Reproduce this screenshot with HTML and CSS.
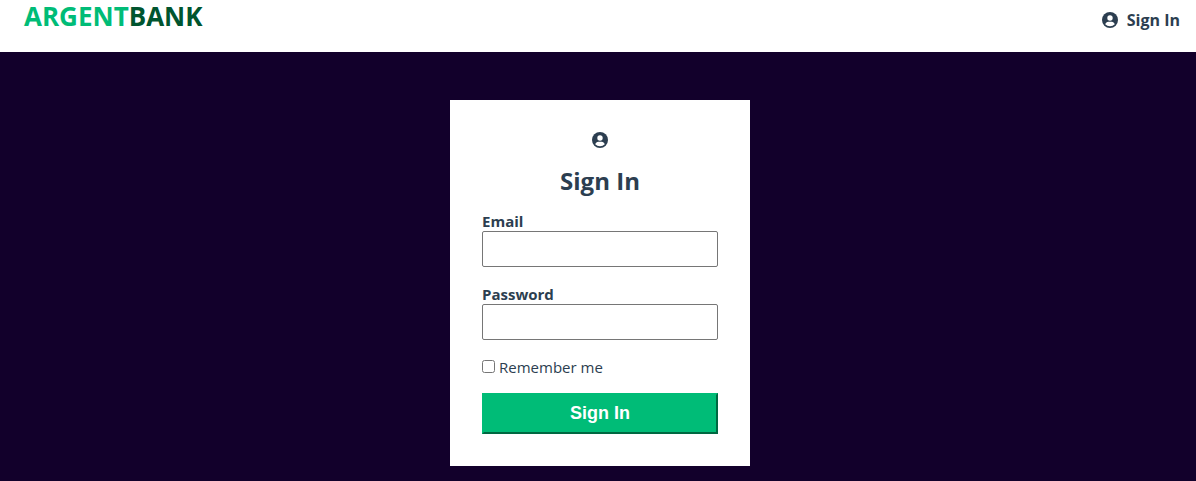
FILE: index.html
```html
<!DOCTYPE html>
<html lang="en">
<head>
<meta charset="utf-8">
<title>Argent Bank - Sign In</title>
<link rel="stylesheet" href="styles.css">
</head>
<body>
<nav class="main-nav">
  <a class="logo" href="#" aria-label="Argent Bank"><span class="logo-argent">ARGENT</span><span class="logo-bank">BANK</span></a>
  <a class="nav-item" href="#">
    <svg class="icon" viewBox="0 0 16 16" aria-hidden="true"><circle cx="8" cy="8" r="8" fill="currentColor"/><circle cx="8" cy="6" r="2.700" fill="#fff"/><path d="M3.200 12.200c.6-1.500 1.700-2.400 3-2.400h3.600c1.300 0 2.400.9 3 2.400a6.500 6.500 0 0 1-9.600 0z" fill="#fff"/></svg>
    <span>Sign In</span>
  </a>
</nav>
<main class="main">
  <section class="card">
    <svg class="icon" viewBox="0 0 16 16" aria-hidden="true"><circle cx="8" cy="8" r="8" fill="currentColor"/><circle cx="8" cy="6" r="2.700" fill="#fff"/><path d="M3.200 12.200c.6-1.500 1.700-2.400 3-2.400h3.600c1.300 0 2.400.9 3 2.400a6.500 6.500 0 0 1-9.600 0z" fill="#fff"/></svg>
    <h1 class="title">Sign In</h1>
    <form class="form">
      <div class="field"><label for="email">Email</label><input type="text" id="email"></div>
      <div class="field"><label for="password">Password</label><input type="password" id="password"></div>
      <div class="remember"><input type="checkbox" id="remember"><label for="remember">Remember me</label></div>
      <button class="submit" type="button">Sign In</button>
    </form>
  </section>
</main>
</body>
</html>
```
FILE: styles.css
```css
* { box-sizing: border-box; }
body {
  margin: 0;
  min-height: 100vh;
  display: flex;
  flex-direction: column;
  color: #2c3e50;
  font: 15px/16px "Segoe UI", "Open Sans", sans-serif;
}
.main-nav {
  display: flex;
  justify-content: space-between;
  align-items: flex-start;
  height: 52px;
  padding: 4px 16px 0 24px;
}
.logo {
  font: bold 26px/24px "Open Sans", sans-serif;
  text-decoration: none;
}
.logo-argent { color: #00bc77; }
.logo-bank { color: #00552f; }
.nav-item {
  display: flex;
  align-items: center;
  gap: 9px;
  padding-top: 8px;
  color: #2c3e50;
  font-size: 16px;
  line-height: 15px;
  font-weight: bold;
  text-decoration: none;
}
.icon { display: block; width: 16px; height: 16px; }
.main {
  flex: 1;
  padding: 48px 0 15px 4px;
  background: #12002b;
}
.card {
  width: 300px;
  margin: 0 auto;
  padding: 32px;
  background: #fff;
}
.card .icon { margin: 0 auto; }
.title {
  margin: 16px 0;
  font-size: 24px;
  line-height: 33px;
  text-align: center;
}
.form { display: flex; flex-direction: column; }
.field {
  display: flex;
  flex-direction: column;
  margin-bottom: 19px;
  font-weight: bold;
}
.field label { padding-bottom: 2px; }
.field input {
  width: 100%;
  height: 36px;
  padding: 5px;
  border: 1px solid #767676;
  border-radius: 2px;
  font-size: 19px;
}
.remember {
  display: flex;
  align-items: flex-start;
  gap: 4px;
  margin-bottom: 18px;
}
.remember input { width: 13px; height: 13px; margin: 1px 0 0; }
.submit {
  height: 41px;
  border: 2px outset #00bc77;
  background: #00bc77;
  color: #fff;
  font: bold 18px/21px "Liberation Sans", Arial, sans-serif;
}
```
